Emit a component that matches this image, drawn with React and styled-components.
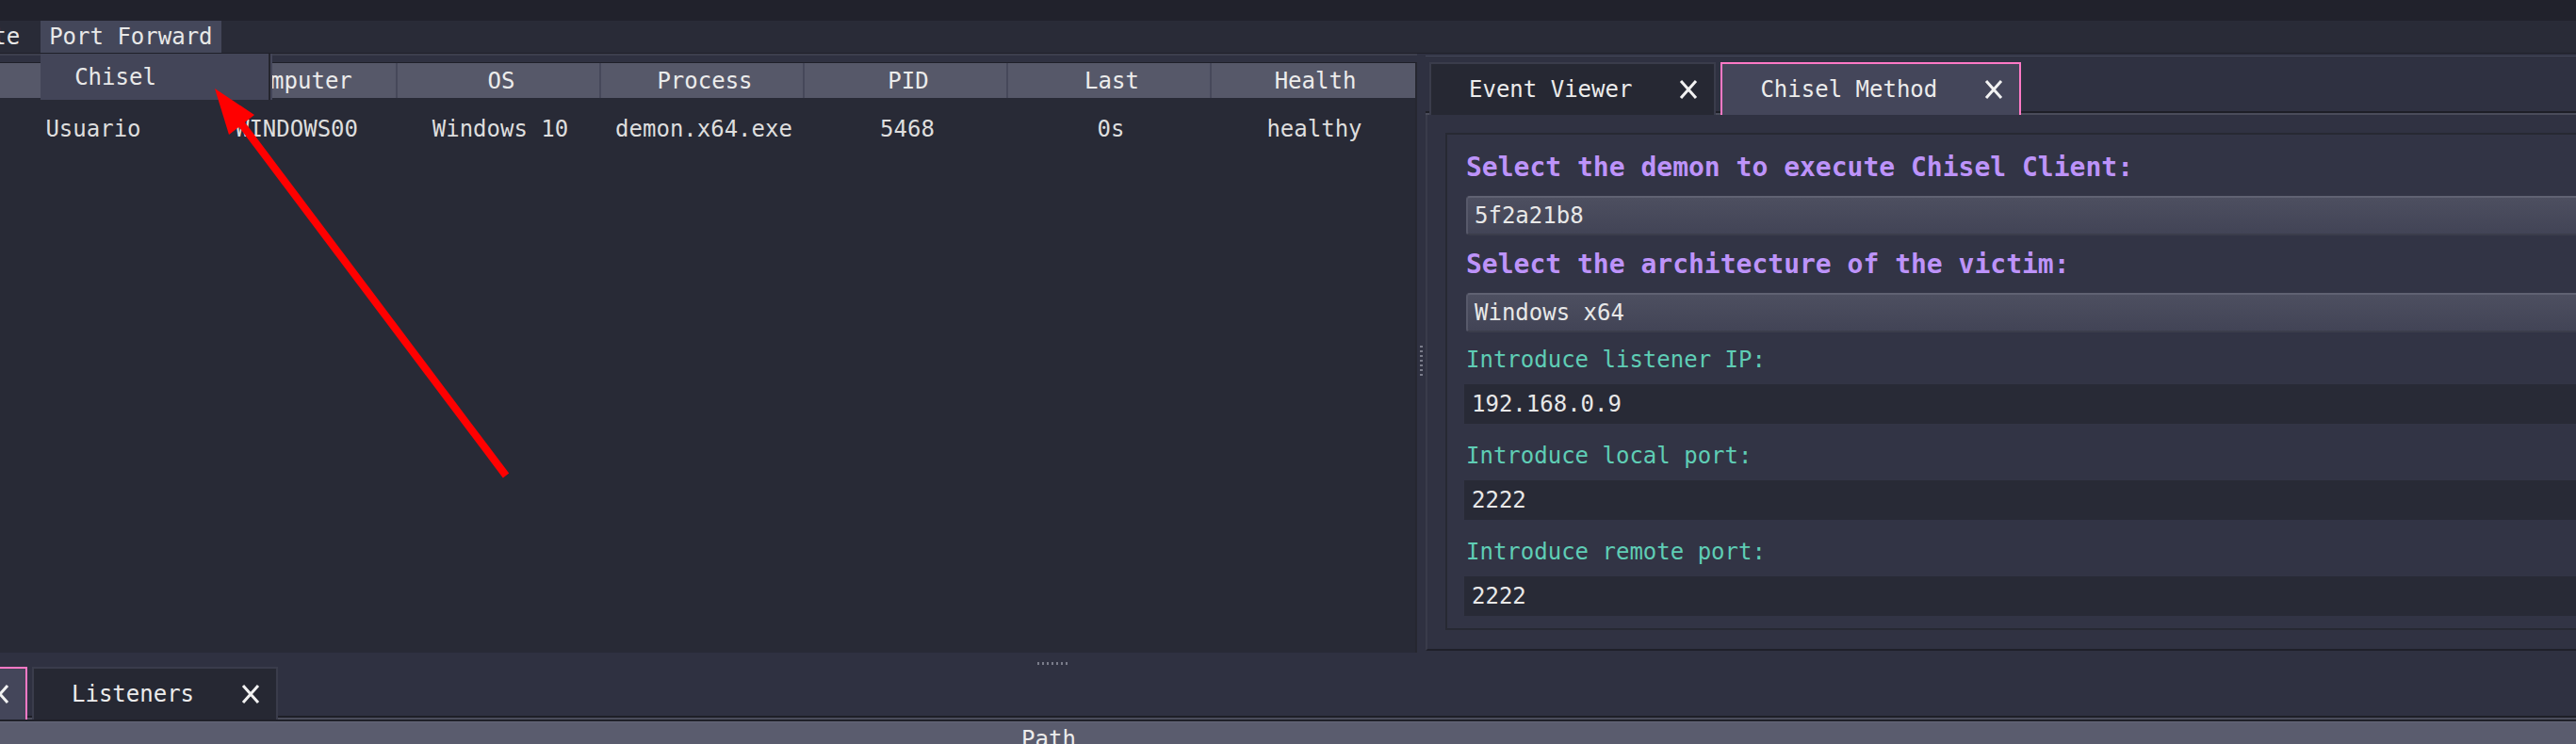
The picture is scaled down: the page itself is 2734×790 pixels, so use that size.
import React from 'react'
import styled, { createGlobalStyle } from 'styled-components'

const GlobalStyle = createGlobalStyle`
  html, body { margin: 0; padding: 0; background: #2f3141; }
  * { box-sizing: border-box; }
`

const Window = styled.div`
  position: relative;
  width: 2734px;
  height: 790px;
  overflow: hidden;
  display: flex;
  flex-direction: column;
  background: #2f3141;
  color: #e6e6e6;
  font-family: "DejaVu Sans Mono", "Liberation Mono", monospace;
  font-size: 24px;
`

const TitleStrip = styled.div`
  flex: none;
  height: 22px;
  background: #21222c;
`

const MenuBar = styled.div`
  position: relative;
  z-index: 5;
  flex: none;
  height: 35px;
  display: flex;
  gap: 13px;
  margin-left: -89px;
  background: #292b37;
  border-bottom: 1px solid #1f2029;
`

const MenuItem = styled.div`
  position: relative;
  display: flex;
  align-items: center;
  padding: 0 9px;
  color: #e8e8e8;
  background: ${p => (p.$open ? '#44475a' : 'transparent')};
`

const Dropdown = styled.div`
  position: absolute;
  top: 35px;
  left: 0;
  width: 244px;
  height: 49px;
  padding-left: 36px;
  display: flex;
  align-items: center;
  background: #434558;
  border-right: 2px solid #24252e;
  box-shadow: 2px 0 0 #434558;
  color: #e8e8e8;
`

const TopSplit = styled.div`
  flex: none;
  height: 636px;
  display: flex;
`

const LeftDock = styled.div`
  flex: none;
  width: 1504px;
  display: flex;
  flex-direction: column;
  border-top: 2px solid #3c3e4d;
  padding-top: 7px;
`

const Table = styled.div`
  flex: 1;
  overflow: hidden;
  background: #282a36;
  border-top: 1px solid #1f2029;
  border-right: 2px solid #262730;
`

const GridRow = styled.div`
  display: grid;
  grid-template-columns: repeat(7, 216px);
  margin-left: -12px;
  height: ${p => (p.$head ? '37px' : '66px')};
  background: ${p => (p.$head ? '#565869' : 'transparent')};
  color: ${p => (p.$head ? '#ececec' : '#dedede')};
`

const Cell = styled.div`
  display: flex;
  align-items: center;
  justify-content: center;
  padding-left: 6px;
  white-space: nowrap;
  border-left: ${p => (p.$sep ? '2px solid #46485a' : 'none')};
`

const VSplitter = styled.div`
  flex: none;
  width: 9px;
  display: flex;
  align-items: center;
  justify-content: center;
  padding-top: 16px;
`

const DotsV = styled.div`
  width: 3px;
  height: 33px;
  background: repeating-linear-gradient(to bottom, #7a7c8a 0 2px, transparent 2px 5px);
`

const RightDock = styled.div`
  flex: none;
  width: 1300px;
  display: flex;
  flex-direction: column;
  padding-top: 2px;
`

const TabBar = styled.div`
  flex: none;
  height: ${p => (p.$h || 63)}px;
  display: flex;
  align-items: flex-end;
  gap: 5px;
  padding-left: ${p => (p.$pad || 0)}px;
  margin-left: ${p => (p.$shift || 0)}px;
  border-top: ${p => (p.$top ? '1px solid #44475a' : 'none')};
  background: linear-gradient(
    to bottom,
    #2f3141 0,
    #2f3141 calc(100% - 4px),
    #1e1f27 calc(100% - 4px),
    #1e1f27 calc(100% - 2px),
    #4a4c5a calc(100% - 2px)
  );
`

const Tab = styled.div`
  flex: none;
  height: 56px;
  display: flex;
  align-items: center;
  gap: 50px;
  padding: 0 17px 0 40px;
  white-space: nowrap;
  color: #ececec;
  background: ${p => (p.$active ? '#44465a' : '#262833')};
  border: 2px solid ${p => (p.$active ? '#ff79c6' : '#3a3c4b')};
  border-bottom: none;
`

const CloseX = () => (
  <svg width="20" height="22" viewBox="0 0 20 22">
    <path d="M2 2 L18 20 M18 2 L2 20" stroke="#f2f2f2" strokeWidth="3" fill="none" />
  </svg>
)

const Pane = styled.div`
  flex: 1;
  margin-bottom: 2px;
  padding: 19px 0 0 19px;
  background: #303242;
  border-left: 2px solid #3a3c4b;
  border-bottom: 2px solid #1f2029;
`

const GroupBox = styled.div`
  display: flex;
  flex-direction: column;
  padding: 14px 0 13px 20px;
  background: #323445;
  border: 2px solid #272933;
  border-right: none;
`

const Heading = styled.div`
  height: 40px;
  display: flex;
  align-items: center;
  margin-top: ${p => p.$gap || 0}px;
  margin-bottom: 11px;
  font-size: 28px;
  font-weight: bold;
  color: #bd93f9;
  white-space: nowrap;
`

const FieldLabel = styled.div`
  height: 32px;
  display: flex;
  align-items: center;
  margin-top: ${p => p.$gap || 0}px;
  margin-bottom: 10px;
  color: #5fcdb5;
  white-space: nowrap;
`

const Combo = styled.div`
  height: 42px;
  display: flex;
  align-items: center;
  padding-left: 7px;
  border: 2px solid #57596a;
  border-top-color: #606272;
  border-bottom-color: #3b3d4b;
  border-right: none;
  border-radius: 4px 0 0 4px;
  background: linear-gradient(to bottom, #4d4f60, #424456);
  color: #e8e8e8;
`

const Input = styled.div`
  height: 42px;
  display: flex;
  align-items: center;
  margin-left: -2px;
  padding-left: 8px;
  background: #282a36;
  color: #e8e8e8;
`

const HSplitter = styled.div`
  flex: none;
  height: 15px;
  padding: 10px 0 0 1101px;
`

const DotsH = styled.div`
  width: 33px;
  height: 3px;
  background: repeating-linear-gradient(to right, #7a7c8a 0 2px, transparent 2px 5px);
`

const BottomPane = styled.div`
  flex: 1;
  border-top: 2px solid #1f2029;
`

const PathHeader = styled.div`
  height: 36px;
  display: grid;
  grid-template-columns: 2226px 1fr;
  align-items: center;
  justify-items: center;
  background: #5a5c6e;
  border-top: 1px solid #66687a;
  color: #ececec;
`

const Arrow = styled.svg`
  position: absolute;
  left: 0;
  top: 0;
  z-index: 10;
  pointer-events: none;
`

// first column header sits under the open menu, so it is left blank
const columns = ['', 'Computer', 'OS', 'Process', 'PID', 'Last', 'Health']
const agent = ['Usuario', 'WINDOWS00', 'Windows 10', 'demon.x64.exe', '5468', '0s', 'healthy']

export default function App() {
  return (
    <Window>
      <GlobalStyle />
      <TitleStrip />
      <MenuBar>
        <MenuItem>Execute</MenuItem>
        <MenuItem $open>
          Port Forward
          <Dropdown>Chisel</Dropdown>
        </MenuItem>
      </MenuBar>

      <TopSplit>
        <LeftDock>
          <Table>
            <GridRow $head>
              {columns.map((c, i) => (
                <Cell key={i} $sep={i > 0}>{c}</Cell>
              ))}
            </GridRow>
            <GridRow>
              {agent.map((v, i) => (
                <Cell key={i}>{v}</Cell>
              ))}
            </GridRow>
          </Table>
        </LeftDock>

        <VSplitter>
          <DotsV />
        </VSplitter>

        <RightDock>
          <TabBar $top $pad={4}>
            <Tab>
              <span>Event Viewer</span>
              <CloseX />
            </Tab>
            <Tab $active>
              <span>Chisel Method</span>
              <CloseX />
            </Tab>
          </TabBar>
          <Pane>
            <GroupBox>
              <Heading>Select the demon to execute Chisel Client:</Heading>
              <Combo>5f2a21b8</Combo>
              <Heading $gap={10}>Select the architecture of the victim:</Heading>
              <Combo>Windows x64</Combo>
              <FieldLabel $gap={13}>Introduce listener IP:</FieldLabel>
              <Input>192.168.0.9</Input>
              <FieldLabel $gap={18}>Introduce local port:</FieldLabel>
              <Input>2222</Input>
              <FieldLabel $gap={18}>Introduce remote port:</FieldLabel>
              <Input>2222</Input>
            </GroupBox>
          </Pane>
        </RightDock>
      </TopSplit>

      <HSplitter>
        <DotsH />
      </HSplitter>

      <TabBar $h={56} $shift={-102}>
        <Tab $active>
          <span />
          <CloseX />
        </Tab>
        <Tab>
          <span>Listeners</span>
          <CloseX />
        </Tab>
      </TabBar>
      <BottomPane>
        <PathHeader>
          <span>Path</span>
        </PathHeader>
      </BottomPane>

      <Arrow width="2734" height="790" viewBox="0 0 2734 790">
        <line x1="537" y1="505" x2="252" y2="126" stroke="#ff0000" strokeWidth="8" />
        <polygon points="228,94 270,122 243,143" fill="#ff0000" />
      </Arrow>
    </Window>
  )
}
